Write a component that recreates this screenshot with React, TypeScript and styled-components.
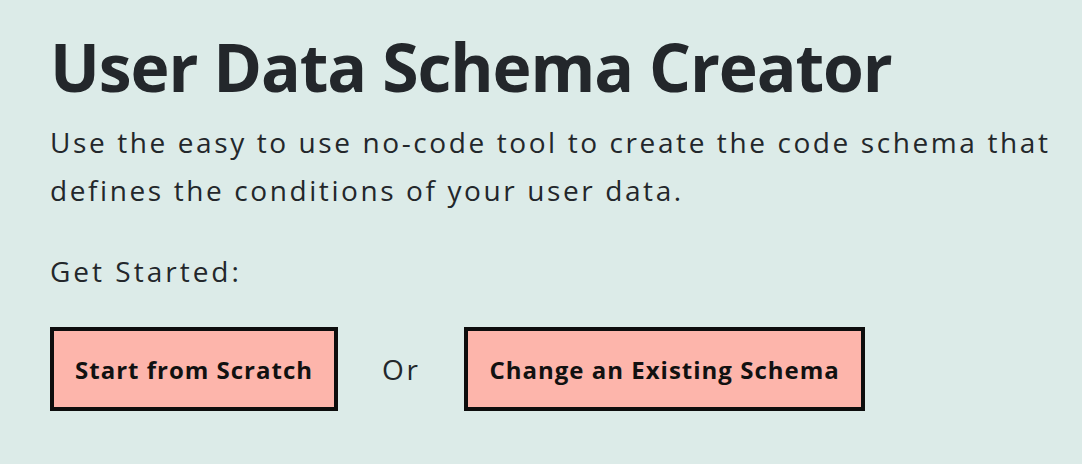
import styled, { createGlobalStyle } from "styled-components";

const GlobalStyle = createGlobalStyle`
  html, body {
    margin: 0;
    padding: 0;
    background: #dcebe8;
  }
  body {
    font-family: "Open Sans", "Liberation Sans", sans-serif;
    color: #23272b;
  }
`;

const Page = styled.main`
  padding: 24px 20px 0 50px;
  min-height: 464px;
  box-sizing: border-box;
`;

const Title = styled.h1`
  margin: 0;
  font-size: 66px;
  line-height: 84px;
  font-weight: 700;
  letter-spacing: -1.1px;
`;

const Intro = styled.p`
  margin: 10px 0 0;
  font-size: 28px;
  line-height: 48px;
  letter-spacing: 2.6px;
`;

const Label = styled.p`
  margin: 37px 0 0;
  font-size: 28px;
  line-height: 40px;
  letter-spacing: 3px;
`;

const Actions = styled.div`
  display: flex;
  align-items: center;
  gap: 44px;
  margin-top: 36px;
`;

const ActionButton = styled.button`
  height: 84px;
  padding: 0 21px;
  background: #fdb5ab;
  border: 4px solid #0d0d0d;
  border-radius: 0;
  font-family: inherit;
  font-size: 24px;
  font-weight: 700;
  letter-spacing: 1px;
  color: #111;
  cursor: pointer;
`;

const Or = styled.span`
  font-size: 28px;
  letter-spacing: 2.6px;
`;

export default function App() {
  return (
    <>
      <GlobalStyle />
      <Page>
        <Title>User Data Schema Creator</Title>
        <Intro>
          Use the easy to use no-code tool to create the code schema that
          defines the conditions of your user data.
        </Intro>
        <Label>Get Started:</Label>
        <Actions>
          <ActionButton>Start from Scratch</ActionButton>
          <Or>Or</Or>
          <ActionButton>Change an Existing Schema</ActionButton>
        </Actions>
      </Page>
    </>
  );
}
